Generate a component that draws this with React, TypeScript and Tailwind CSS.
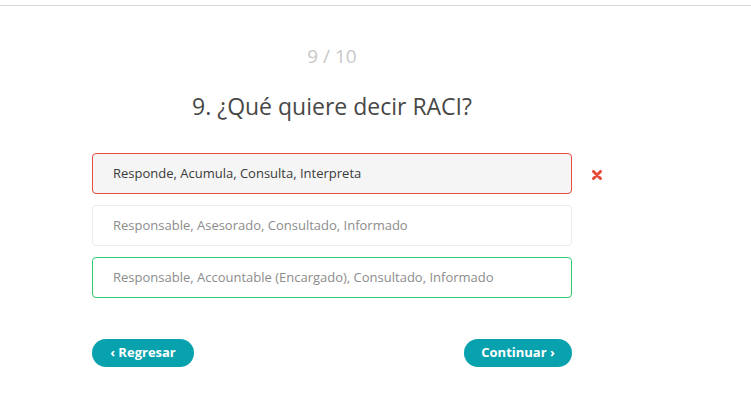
import React from "react";

const options = [
  { text: "Responde, Acumula, Consulta, Interpreta", state: "wrong" },
  { text: "Responsable, Asesorado, Consultado, Informado", state: "none" },
  { text: "Responsable, Accountable (Encargado), Consultado, Informado", state: "correct" },
];

export default function App() {
  return (
    <div className="w-[751px] h-[410px] bg-white overflow-hidden" style={{ fontFamily: "'Open Sans', sans-serif" }}>
      <div className="mt-[5px] h-px bg-[#d9d9d9]" />
      <div className="pl-[92px] pt-[38px]">
        <div className="w-[480px] flex flex-col items-center">
          <div className="text-[19px] leading-[24px] text-[#c8c8c8]">9 / 10</div>
          <h1 className="mt-[24px] text-[23px] leading-[28px] text-[#484848]">9. ¿Qué quiere decir RACI?</h1>
        </div>
        <div className="mt-[33px] flex flex-col gap-[11px]">
          {options.map((o) => (
            <div key={o.text} className="flex items-center">
              <div
                className={
                  "w-[480px] h-[41px] rounded-[4px] border flex items-center pl-[20px] text-[13px] " +
                  (o.state === "wrong"
                    ? "border-[#e74c3c] bg-[#f5f5f5] text-[#3a3a3a]"
                    : o.state === "correct"
                    ? "border-[#2ecc71] bg-white text-[#8c8c8c]"
                    : "border-[#ececec] bg-white text-[#8c8c8c]")
                }
              >
                {o.text}
              </div>
              {o.state === "wrong" && (
                <svg className="ml-[20px] mt-[2px]" width="10" height="10" viewBox="0 0 10 10">
                  <path d="M1.5 1.5 L8.5 8.5 M8.5 1.5 L1.5 8.5" stroke="#e74c3c" strokeWidth="3" strokeLinecap="round" />
                </svg>
              )}
            </div>
          ))}
        </div>
        <div className="w-[480px] mt-[41px] flex justify-between">
          <button className="h-[28px] w-[102px] rounded-full bg-[#07a2ae] text-white font-bold text-[13px] flex items-center justify-center">
            ‹ Regresar
          </button>
          <button className="h-[28px] w-[108px] rounded-full bg-[#07a2ae] text-white font-bold text-[13px] flex items-center justify-center">
            Continuar ›
          </button>
        </div>
      </div>
    </div>
  );
}
